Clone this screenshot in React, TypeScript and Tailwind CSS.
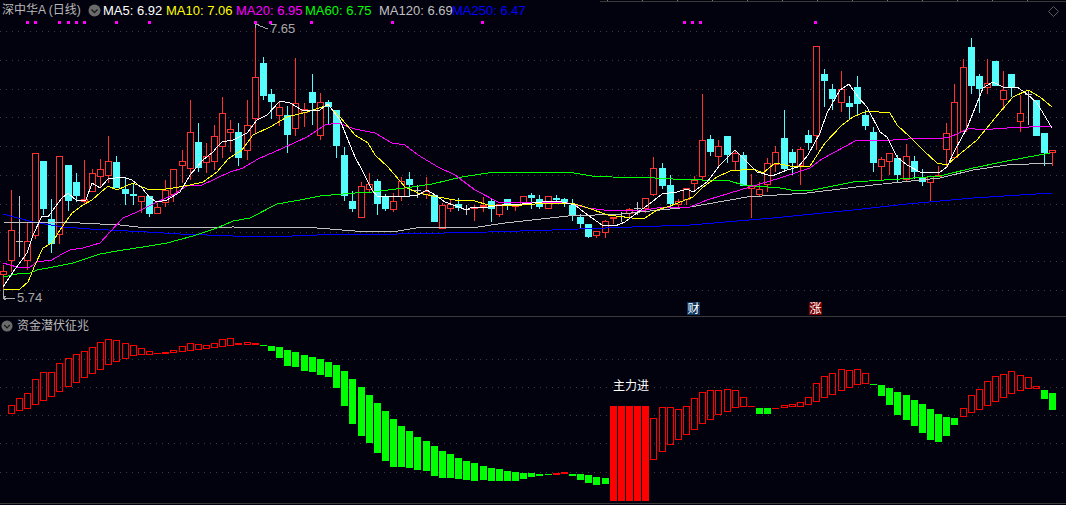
import React from "react";

type K = "r" | "c" | "g";
const candles: [number, number, number, number, K][] = [
  [265,297,271,275,"r"],[190,272,230,261,"r"],[196,257,241,241,"g"],[223,270,241,261,"r"],[153,239,153,236,"r"],
  [161,215,161,209,"c"],[199,253,219,244,"c"],[156,244,156,235,"r"],[165,211,165,201,"c"],[173,202,182,196,"c"],
  [160,205,199,202,"r"],[169,192,173,192,"r"],[159,187,169,177,"r"],[136,183,161,176,"r"],[156,188,162,188,"c"],
  [178,205,189,194,"c"],[183,205,194,196,"c"],[196,213,196,202,"r"],[196,217,196,214,"c"],[203,214,207,214,"r"],
  [180,207,190,203,"r"],[169,202,169,195,"r"],[150,183,161,166,"r"],[100,180,132,169,"r"],[123,172,142,168,"c"],
  [143,173,156,163,"r"],[125,170,136,162,"r"],[97,158,113,147,"r"],[120,152,129,133,"r"],[123,166,132,158,"c"],
  [100,160,125,151,"r"],[24,133,77,119,"r"],[57,100,63,96,"c"],[89,119,94,102,"c"],[102,126,107,116,"r"],
  [106,153,115,135,"c"],[58,136,103,129,"r"],[103,127,109,113,"r"],[74,125,92,103,"c"],[93,140,102,136,"r"],
  [100,125,102,107,"c"],[110,158,110,146,"c"],[147,201,155,196,"c"],[191,212,201,209,"c"],[182,218,186,218,"r"],
  [173,193,184,190,"r"],[179,215,181,204,"c"],[194,211,196,209,"c"],[193,212,201,210,"r"],[177,201,181,197,"r"],
  [172,197,179,185,"c"],[185,198,190,190,"g"],[177,199,191,195,"r"],[195,222,195,222,"c"],[203,229,205,229,"r"],
  [200,212,204,209,"r"],[198,211,204,208,"c"],[205,215,209,209,"g"],[205,221,207,208,"r"],[197,212,205,207,"r"],
  [199,222,201,209,"c"],[204,217,204,215,"r"],[199,210,199,205,"c"],[205,211,205,206,"r"],[196,205,196,205,"r"],
  [193,209,195,198,"c"],[195,209,199,207,"c"],[196,209,196,209,"r"],[195,202,198,200,"c"],[198,207,199,202,"c"],
  [199,221,205,216,"c"],[214,228,217,224,"c"],[224,238,224,237,"c"],[231,238,231,236,"r"],[220,238,221,233,"r"],
  [217,224,217,219,"r"],[212,222,216,216,"g"],[208,218,209,214,"r"],[202,215,208,208,"g"],[198,213,198,209,"r"],
  [157,196,168,195,"r"],[163,189,168,186,"c"],[175,207,185,204,"c"],[199,207,201,205,"r"],[188,205,188,200,"r"],
  [176,192,180,184,"r"],[94,181,140,177,"r"],[135,156,139,152,"c"],[140,166,146,157,"r"],[136,163,136,155,"c"],
  [150,170,153,162,"r"],[152,186,155,186,"c"],[174,218,186,189,"r"],[182,196,189,195,"r"],[158,192,163,185,"r"],
  [146,172,152,165,"r"],[110,170,138,169,"c"],[149,175,152,163,"c"],[147,185,149,166,"r"],[130,150,135,143,"c"],
  [46,150,46,136,"r"],[69,107,74,81,"c"],[84,110,89,99,"c"],[71,112,89,103,"r"],[96,120,103,107,"c"],
  [76,115,87,104,"c"],[110,130,115,126,"c"],[127,172,132,163,"c"],[157,181,159,167,"r"],[153,175,153,162,"r"],
  [155,183,158,175,"c"],[144,181,156,180,"r"],[156,179,161,172,"c"],[169,186,177,182,"c"],[176,201,176,183,"r"],
  [166,177,175,176,"r"],[123,167,133,150,"r"],[84,158,102,158,"r"],[59,132,67,132,"r"],[38,94,47,86,"c"],
  [74,113,76,89,"c"],[59,94,83,88,"r"],[61,86,61,86,"c"],[71,110,90,100,"r"],[74,97,74,87,"c"],
  [95,132,113,122,"r"],[90,125,94,94,"g"],[100,136,100,136,"c"],[133,166,133,153,"c"],[150,166,150,153,"r"],
];

const ma5 = "3,287 13,272 27,253 33,235 42,216 48,217 55,207 62,198 68,193 77,201 86,200 92,183 100,188 108,179 123,177 132,180 142,188 150,198 157,202 167,200 180,192 190,175 203,160 213,152 217,147 222,142 233,140 247,133 257,120 267,115 280,101 290,103 302,110 320,110 328,104 340,120 348,140 355,157 362,170 372,190 378,197 410,196 418,195 427,190 435,195 445,202 467,210 472,207 488,207 502,205 522,204 542,202 558,201 575,205 585,213 602,225 615,226 625,222 638,212 648,205 662,194 677,192 687,189 693,192 707,182 720,165 735,150 747,162 757,172 772,176 787,170 798,167 808,155 820,133 827,113 840,90 849,84 858,97 867,107 880,132 887,137 897,157 907,165 920,172 930,173 940,172 947,167 955,150 967,128 977,103 983,88 993,82 1003,87 1017,87 1027,94 1037,103 1052,128";
const ma10 = "3,289 20,289 28,282 35,265 43,248 52,243 60,230 72,213 83,205 92,200 100,193 108,186 117,190 133,183 147,189 160,190 173,188 190,185 203,182 217,172 228,159 242,150 253,135 270,127 287,117 307,112 328,105 340,117 355,135 368,143 375,155 388,167 405,187 418,193 438,197 455,200 475,201 488,205 522,205 548,203 572,203 588,208 608,215 632,218 645,218 657,210 670,206 693,197 703,187 717,177 730,171 753,169 763,173 775,163 790,166 810,166 825,143 842,125 853,117 867,111 890,113 897,125 910,137 923,150 937,163 947,165 955,158 977,140 1000,112 1013,97 1028,90 1040,97 1052,107";
const ma20 = "3,263 17,267 30,267 37,262 52,260 62,254 70,250 83,248 100,243 110,232 123,218 137,212 157,202 173,195 188,185 200,186 217,178 230,172 243,168 258,159 283,148 307,137 325,125 338,123 355,129 365,131 375,133 392,143 405,145 418,155 438,167 455,175 475,190 498,202 555,202 568,203 588,208 612,211 645,210 657,208 690,207 707,200 740,190 780,178 810,168 822,159 857,140 893,140 923,138 937,139 950,137 970,128 980,130 1007,128 1052,126";
const ma60 = "3,277 17,274 30,273 37,270 53,267 73,263 100,254 117,251 143,247 167,243 193,236 217,228 233,221 250,218 277,204 300,200 320,196 343,194 355,193 372,192 388,190 412,187 432,184 462,177 488,173 503,172 568,172 592,176 612,177 655,178 673,179 730,181 743,185 780,188 797,191 813,190 853,182 900,179 940,176 973,168 1007,161 1050,153";
const ma120 = "3,222 80,223 120,225 147,228 233,227 317,228 355,231 398,231 422,227 478,227 505,223 568,216 622,214 640,212 690,207 747,197 807,193 873,185 940,178 973,170 1007,165 1052,163";
const ma250 = "3,214 33,222 63,227 90,229 147,232 180,234 233,236 267,237 317,235 398,234 445,233 488,232 552,230 632,227 690,225 773,218 853,210 907,204 973,198 1052,193";

const bars: [number, number][] = [
  [315,316],[405,414],[398,411],[393,409],[379,405],[372,401],[372,397],[363,392],[358,387],[354,383],
  [351,378],[347,374],[342,370],[339,365],[340,362],[343,359],[345,356],[348,355],[351,355],[353,354],
  [352,354],[350,353],[346,352],[343,351],[344,350],[345,349],[343,348],[339,347],[338,346],[343,345],
  [342,345],[343,345],[345,346],[346,351],[347,358],[350,366],[352,367],[355,371],[357,372],[359,375],
  [362,377],[365,388],[371,406],[379,424],[387,436],[395,443],[403,453],[411,461],[419,467],[426,467],
  [431,468],[437,470],[441,471],[446,476],[451,478],[454,478],[458,479],[461,480],[463,481],[466,480],
  [468,481],[469,481],[471,481],[472,481],[473,479],[473,477],[474,476],[474,475],[473,475],[472,474],
  [474,476],[474,480],[475,483],[477,485],[478,484],[406,501],[406,501],[406,501],[406,501],[406,501],
  [418,460],[407,452],[407,445],[409,440],[406,435],[398,430],[392,424],[390,420],[390,415],[389,412],
  [390,408],[397,407],[406,407],[408,414],[408,414],[408,409],[405,408],[404,407],[402,407],[397,405],
  [383,402],[376,398],[373,395],[369,391],[370,388],[369,385],[373,384],[384,385],[385,396],[388,405],
  [392,415],[395,420],[400,426],[404,433],[409,440],[414,442],[417,436],[418,425],[408,417],[395,413],
  [389,410],[381,406],[376,402],[374,398],[371,394],[375,391],[377,389],[386,389],[390,399],[393,410],
];
const green = new Set([0,32,33,34,35,36,37,38,39,40,41,42,43,44,45,46,47,48,49,50,51,52,53,54,55,56,57,58,59,60,61,62,63,64,65,66,67,70,71,72,73,74,93,94,107,108,109,110,111,112,113,114,115,116,117,128,129]);
const solidRed = new Set([19,68,69,75,76,77,78,79,92,95]);

const topDots = [27,35,59,68,76,84,116,149,255,270,311,392,482,684,692,700,815];
const grid1 = [31,60,89,117,146,175,204,232,261,290];
const grid2 = [359,387,415,443,472];
const ticks = Array.from({ length: 13 }, (_, k) => 607 + k * 35);
const xAt = (i: number) => Math.floor(i * 8.136 + 0.02);

function Chevron({ className }: { className: string }) {
  return (
    <svg viewBox="0 0 13 13" className={className}>
      <circle cx="6.5" cy="6.5" r="6" fill="#6b6b6b" />
      <path d="M3.5 5.5 L6.5 8.5 L9.5 5.5" fill="none" stroke="#1a1a1a" strokeWidth="1.4" />
    </svg>
  );
}

function Ma({ label, color }: { label: string; color: string }) {
  return <span className={color}>{label}</span>;
}

export default function App() {
  return (
    <div className="flex h-[505px] w-[1066px] flex-col overflow-hidden bg-[#02020e] font-['Liberation_Sans','Noto_Sans_CJK_SC',sans-serif]">
      <section className="relative h-[316px] shrink-0">
        <svg viewBox="0 0 1066 316" className="block h-[316px] w-[1066px]" shapeRendering="crispEdges">
          <line x1="600" y1="1.5" x2="1066" y2="1.5" stroke="#3a3a3a" />
          {ticks.map((x) => (
            <line key={x} x1={x + 0.5} y1="0" x2={x + 0.5} y2="1" stroke="#777" />
          ))}
          {grid1.map((y) => (
            <line key={y} x1="0" y1={y + 0.5} x2="1066" y2={y + 0.5} stroke="#3d3d3d" strokeDasharray="1 5" />
          ))}
          {topDots.map((x) => (
            <rect key={x} x={x - 1} y="21" width="3" height="3" fill="#ff00ff" />
          ))}
          {candles.map(([hi, lo, top, bot, k], i) => {
            const x = xAt(i);
            const color = k === "r" ? "#ff3232" : k === "c" ? "#54fcfc" : "#c8c8c8";
            return (
              <g key={i}>
                <rect x={x + 3} y={hi} width="1" height={lo - hi} fill={color} />
                {k === "r" && (
                  <rect x={x + 0.5} y={top + 0.5} width="6" height={Math.max(bot - top - 1, 1)} fill="#02020e" stroke={color} />
                )}
                {k === "c" && <rect x={x} y={top} width="7" height={Math.max(bot - top, 1)} fill={color} />}
                {k === "g" && <rect x={x} y={top} width="7" height="1" fill={color} />}
              </g>
            );
          })}
          <g fill="none" strokeWidth="1">
            <polyline points={ma250} stroke="#0000ff" />
            <polyline points={ma120} stroke="#c0c0c0" />
            <polyline points={ma60} stroke="#00ff00" />
            <polyline points={ma20} stroke="#ff00ff" />
            <polyline points={ma10} stroke="#ffff00" />
            <polyline points={ma5} stroke="#ffffff" />
          </g>
          <g fill="none" stroke="#a8a8a8" strokeWidth="1">
            <path d="M255 24 L268 29 M255 24 L259 24 M255 24 L256 28" />
            <path d="M3 298 L15 298 M3 298 L6 296 M3 298 L6 300 M3 289 L3 298" />
          </g>
          <path d="M1053.5 6.5 L1058.5 11.5 L1053.5 16.5 L1048.5 11.5 Z" fill="none" stroke="#5a5a5a" shapeRendering="auto" />
        </svg>

        <header className="absolute left-[2px] top-[2px] flex h-[16px] items-center text-[13px] leading-none whitespace-nowrap">
          <span className="w-[84px] text-[12px] text-[#b9b9b9]">深中华A (日线)</span>
          <Chevron className="ml-[2px] h-[13px] w-[13px]" />
          <span className="ml-[2px] w-[63px]"><Ma label="MA5: 6.92" color="text-white" /></span>
          <span className="w-[70px]"><Ma label="MA10: 7.06" color="text-[#ffff00]" /></span>
          <span className="w-[69px]"><Ma label="MA20: 6.95" color="text-[#ff00ff]" /></span>
          <span className="w-[74px]"><Ma label="MA60: 6.75" color="text-[#00ff00]" /></span>
          <span className="w-[73px]"><Ma label="MA120: 6.69" color="text-[#c0c0c0]" /></span>
          <span><Ma label="MA250: 6.47" color="text-[#0000ff]" /></span>
        </header>

        <span className="absolute left-[270px] top-[22px] text-[13px] leading-[14px] text-[#a8a8a8]">7.65</span>
        <span className="absolute left-[17px] top-[291px] text-[13px] leading-[14px] text-[#a8a8a8]">5.74</span>
        <span className="absolute left-[687px] top-[302px] flex h-[13px] w-[13px] items-center justify-center bg-[#0c3560] text-[12px] leading-none text-white">财</span>
        <span className="absolute left-[809px] top-[302px] flex h-[13px] w-[13px] items-center justify-center bg-[#7a0000] text-[12px] leading-none text-white">涨</span>
      </section>

      <div className="h-px shrink-0 bg-[#3a3a3a]" />

      <section className="relative h-[186px] shrink-0">
        <svg viewBox="0 317 1066 186" className="block h-[186px] w-[1066px]" shapeRendering="crispEdges">
          {grid2.map((y) => (
            <line key={y} x1="0" y1={y + 0.5} x2="1066" y2={y + 0.5} stroke="#3d3d3d" strokeDasharray="1 5" />
          ))}
          {bars.map(([top, bot], i) => {
            const x = xAt(i);
            if (i === 0) return <rect key={i} x="0" y={top} width="7" height="1" fill="#00ff00" />;
            if (green.has(i)) return <rect key={i} x={x} y={top} width="7" height={bot - top} fill="#00ff00" />;
            if (solidRed.has(i)) return <rect key={i} x={x} y={top} width="7" height={bot - top} fill="#ff0000" />;
            return <rect key={i} x={x + 0.5} y={top + 0.5} width="6" height={bot - top - 1} fill="none" stroke="#ff0000" />;
          })}
        </svg>
        <div className="absolute left-[1px] top-[2px] flex h-[13px] items-center gap-[4px] text-[12px] leading-none text-[#b9b9b9]">
          <Chevron className="h-[12px] w-[12px]" />
          <span>资金潜伏征兆</span>
        </div>
        <span className="absolute left-[613px] top-[62px] text-[12px] leading-[14px] text-white">主力进</span>
      </section>

      <div className="h-px shrink-0 bg-[#3a3a3a]" />
    </div>
  );
}
